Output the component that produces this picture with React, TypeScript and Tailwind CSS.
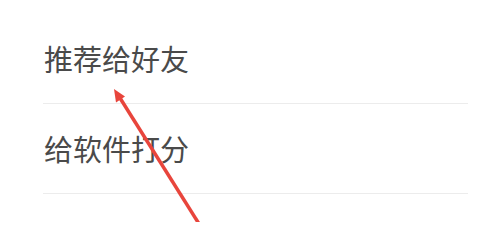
import React from "react";

export default function App() {
  const items = ["推荐给好友", "给软件打分"];
  return (
    <div
      className="relative w-[497px] h-[222px] overflow-hidden bg-white"
      style={{ fontFamily: '"Noto Sans CJK SC", "Noto Sans", sans-serif' }}
    >
      <div className="pl-[43px] pr-[29px] pt-[14px]">
        {items.map((t) => (
          <div
            key={t}
            className="h-[90px] flex items-center border-b border-[#ececec] text-[29px] leading-none font-normal text-[#4a4a4a] pl-[1px]"
          >
            {t}
          </div>
        ))}
      </div>
      <svg
        className="absolute left-0 top-0 pointer-events-none"
        width="497"
        height="222"
        viewBox="0 0 497 222"
      >
        <line
          x1="201"
          y1="227"
          x2="120"
          y2="98"
          stroke="#e8453c"
          strokeWidth="3.5"
        />
        <polygon points="114,89 125,96.5 116,102.5" fill="#e8453c" />
      </svg>
    </div>
  );
}
